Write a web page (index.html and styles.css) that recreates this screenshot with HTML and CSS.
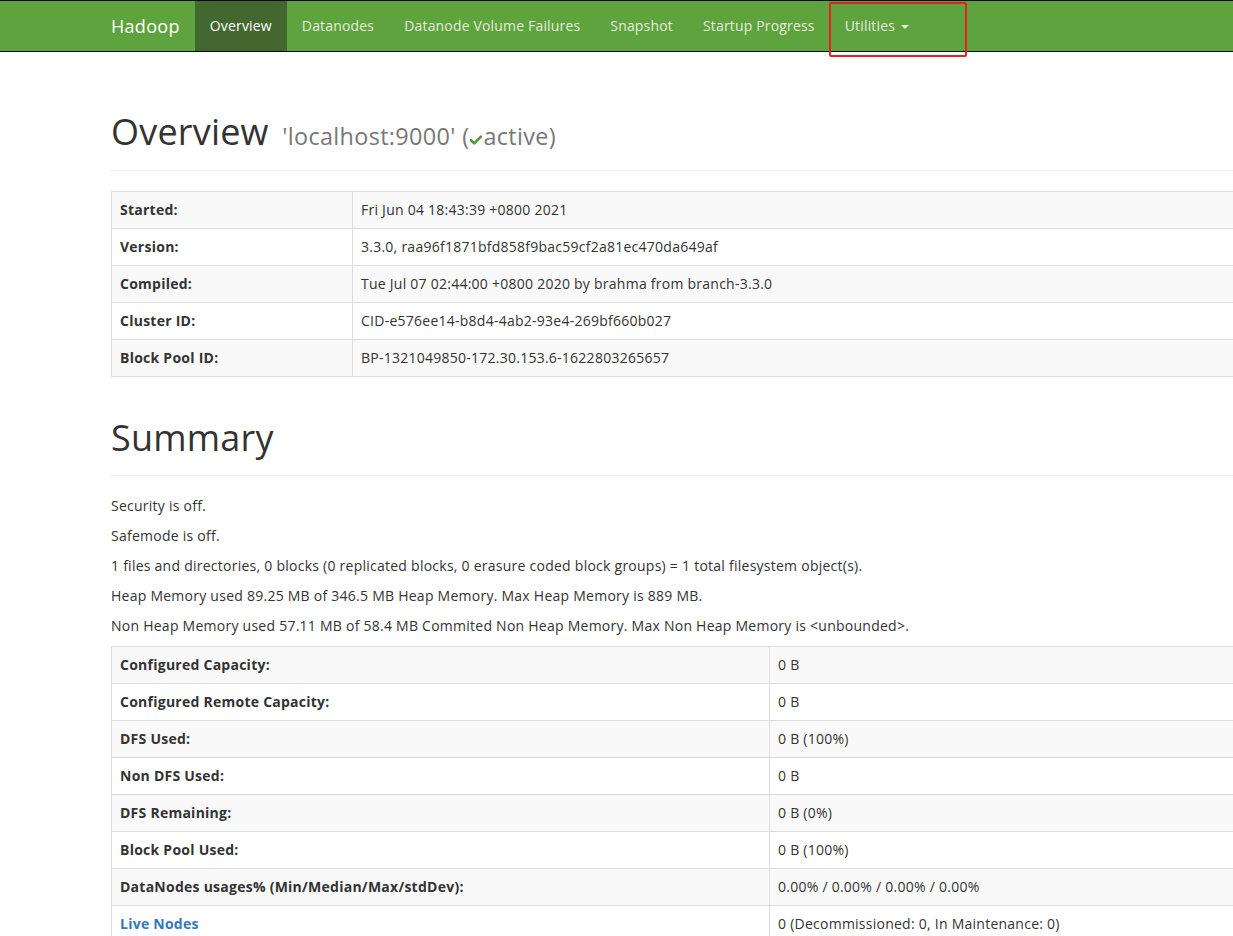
FILE: index.html
```html
<!DOCTYPE html>
<html>
<head>
<meta charset="utf-8">
<title>Namenode information</title>
<link rel="stylesheet" href="styles.css">
</head>
<body>
<header class="navbar">
  <a class="brand" href="#">Hadoop</a>
  <ul class="nav">
    <li class="active"><a href="#">Overview</a></li>
    <li><a href="#">Datanodes</a></li>
    <li><a href="#">Datanode Volume Failures</a></li>
    <li><a href="#">Snapshot</a></li>
    <li><a href="#">Startup Progress</a></li>
    <li><a href="#">Utilities <span class="caret"></span></a></li>
  </ul>
  <div class="annot"></div>
</header>

<main class="container">
  <div class="page-header first">
    <h1>Overview <small>'localhost:9000' (<svg class="ok" viewBox="0 0 12 10" width="12" height="10"><path d="M1 5.2 L4.3 8.4 L11 1.6" fill="none" stroke="#4e9a3a" stroke-width="2.6" stroke-linecap="round" stroke-linejoin="round"/></svg>active)</small></h1>
  </div>

  <table class="table t1">
    <tr><th>Started:</th><td>Fri Jun 04 18:43:39 +0800 2021</td></tr>
    <tr><th>Version:</th><td>3.3.0, raa96f1871bfd858f9bac59cf2a81ec470da649af</td></tr>
    <tr><th>Compiled:</th><td>Tue Jul 07 02:44:00 +0800 2020 by brahma from branch-3.3.0</td></tr>
    <tr><th>Cluster ID:</th><td>CID-e576ee14-b8d4-4ab2-93e4-269bf660b027</td></tr>
    <tr><th>Block Pool ID:</th><td>BP-1321049850-172.30.153.6-1622803265657</td></tr>
  </table>

  <div class="page-header second">
    <h1>Summary</h1>
  </div>

  <p>Security is off.</p>
  <p>Safemode is off.</p>
  <p>1 files and directories, 0 blocks (0 replicated blocks, 0 erasure coded block groups) = 1 total filesystem object(s).</p>
  <p>Heap Memory used 89.25 MB of 346.5 MB Heap Memory. Max Heap Memory is 889 MB.</p>
  <p>Non Heap Memory used 57.11 MB of 58.4 MB Commited Non Heap Memory. Max Non Heap Memory is &lt;unbounded&gt;.</p>

  <table class="table t2">
    <tr><th>Configured Capacity:</th><td>0 B</td></tr>
    <tr><th>Configured Remote Capacity:</th><td>0 B</td></tr>
    <tr><th>DFS Used:</th><td>0 B (100%)</td></tr>
    <tr><th>Non DFS Used:</th><td>0 B</td></tr>
    <tr><th>DFS Remaining:</th><td>0 B (0%)</td></tr>
    <tr><th>Block Pool Used:</th><td>0 B (100%)</td></tr>
    <tr><th>DataNodes usages% (Min/Median/Max/stdDev):</th><td>0.00% / 0.00% / 0.00% / 0.00%</td></tr>
    <tr><th><a href="#">Live Nodes</a></th><td>0 (Decommissioned: 0, In Maintenance: 0)</td></tr>
  </table>
</main>
</body>
</html>
```

FILE: styles.css
```css
html { overflow: hidden; }
body {
  margin: 0;
  font-family: "Open Sans", "Liberation Sans", sans-serif;
  font-size: 14px;
  line-height: 20px;
  letter-spacing: 0.25px;
  color: #333;
  background: #fff;
}
a { text-decoration: none; }

.navbar {
  position: relative;
  display: flex;
  align-items: stretch;
  height: 50px;
  background: #5fa33e;
  border-top: 1px solid #080808;
  border-bottom: 1px solid #080808;
  padding-left: 96px;
}
.brand {
  display: block;
  padding: 15px 15px;
  font-size: 18px;
  line-height: 20px;
  letter-spacing: 0.3px;
  color: #fff;
}
.nav {
  display: flex;
  margin: 0;
  padding: 0;
  list-style: none;
}
.nav li a {
  display: block;
  padding: 15px 15px;
  line-height: 20px;
  letter-spacing: 0.17px;
  color: #e4ecdc;
}
.nav li.active a {
  background: #43682f;
  color: #fff;
}
.caret {
  display: inline-block;
  width: 0;
  height: 0;
  margin-left: 2px;
  vertical-align: middle;
  border-top: 4px solid #e4ecdc;
  border-left: 4px solid transparent;
  border-right: 4px solid transparent;
}
.annot {
  position: absolute;
  left: 829px;
  top: 1px;
  width: 134px;
  height: 51px;
  border: 2px solid #e8201c;
  border-radius: 2px;
}

.container {
  padding-left: 111px;
  width: 1170px;
}
.page-header {
  margin: 41px 0 20px;
  padding-bottom: 14px;
  border-bottom: 1px solid #eee;
}
.page-header.first { margin-top: 60px; }
.page-header.second { padding-bottom: 17px; }
h1 {
  margin: 0;
  font-size: 36px;
  line-height: 40px;
  font-weight: 400;
  letter-spacing: 0.2px;
  color: #333;
}
h1 small {
  margin-left: 4px;
  font-size: 23.4px;
  letter-spacing: 0.35px;
  color: #777;
}
.ok { vertical-align: 0; margin: 0 1px 0 1px; }

p { margin: 0 0 10px; }

.table {
  width: 100%;
  border-collapse: collapse;
  border-spacing: 0;
  border: 1px solid #ddd;
  margin-bottom: 20px;
}
.table th, .table td {
  padding: 8px;
  line-height: 20px;
  text-align: left;
  vertical-align: top;
  border: 1px solid #ddd;
}
.table th { font-weight: 700; }
.table tr:nth-child(odd) { background: #f9f9f9; }
.t1 th { width: 224px; }
.t2 th { width: 641px; }
.table th a { color: #337ab7; }
```
